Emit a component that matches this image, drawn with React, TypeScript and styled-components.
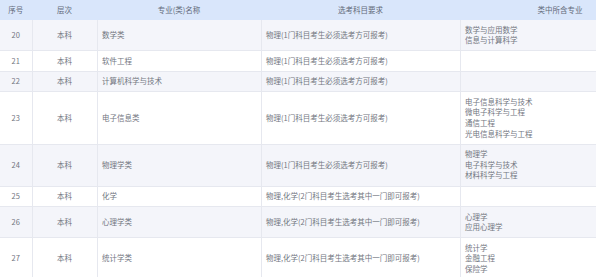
import React from "react";
import styled, { createGlobalStyle } from "styled-components";

const Global = createGlobalStyle`
  html, body { margin: 0; padding: 0; background: #ffffff; overflow: hidden; }
  body { font-family: "Noto Sans CJK SC", "Noto Sans", sans-serif; }
`;

const Wrap = styled.div`
  width: 596px;
  height: 277px;
  overflow: hidden;
`;

const Table = styled.table`
  width: 660px;
  border-collapse: collapse;
  table-layout: fixed;
  font-size: 7.5px;
  line-height: 10.6px;
  color: #72767f;
`;

const Th = styled.th`
  background: #d9e6fb;
  color: #626a7a;
  font-weight: 400;
  height: 20px;
  padding: 0 4px;
  text-align: center;
  border-right: 1px solid #d9e6fb;
  box-sizing: border-box;
`;

const Tr = styled.tr<{ $striped: boolean }>`
  background: ${(p) => (p.$striped ? "#f4f5fa" : "#ffffff")};
  border-bottom: 1px solid #e6e8ef;
`;

const Td = styled.td<{ $center?: boolean }>`
  padding: 4.5px 4.5px;
  text-align: ${(p) => (p.$center ? "center" : "left")};
  vertical-align: middle;
  border-right: 1px solid #e6e8ef;
  white-space: nowrap;
`;

const Line = styled.div``;

const req1 = "物理(1门科目考生必须选考方可报考)";
const req2 = "物理,化学(2门科目考生选考其中一门即可报考)";

const rows = [
  { no: 20, name: "数学类", req: req1, majors: ["数学与应用数学", "信息与计算科学"] },
  { no: 21, name: "软件工程", req: req1, majors: [] },
  { no: 22, name: "计算机科学与技术", req: req1, majors: [] },
  { no: 23, name: "电子信息类", req: req1, majors: ["电子信息科学与技术", "微电子科学与工程", "通信工程", "光电信息科学与工程"] },
  { no: 24, name: "物理学类", req: req1, majors: ["物理学", "电子科学与技术", "材料科学与工程"] },
  { no: 25, name: "化学", req: req2, majors: [] },
  { no: 26, name: "心理学类", req: req2, majors: ["心理学", "应用心理学"] },
  { no: 27, name: "统计学类", req: req2, majors: ["统计学", "金融工程", "保险学"] },
];

export default function App() {
  return (
    <Wrap>
      <Global />
      <Table>
        <colgroup>
          <col style={{ width: 32 }} />
          <col style={{ width: 65 }} />
          <col style={{ width: 164 }} />
          <col style={{ width: 199 }} />
          <col style={{ width: 200 }} />
        </colgroup>
        <thead>
          <tr>
            <Th>序号</Th>
            <Th>层次</Th>
            <Th>专业(类)名称</Th>
            <Th>选考科目要求</Th>
            <Th>类中所含专业</Th>
          </tr>
        </thead>
        <tbody>
          {rows.map((r, i) => (
            <Tr key={r.no} $striped={i % 2 === 0}>
              <Td $center>{r.no}</Td>
              <Td $center>本科</Td>
              <Td>{r.name}</Td>
              <Td>{r.req}</Td>
              <Td>
                {r.majors.map((m) => (
                  <Line key={m}>{m}</Line>
                ))}
              </Td>
            </Tr>
          ))}
        </tbody>
      </Table>
    </Wrap>
  );
}
